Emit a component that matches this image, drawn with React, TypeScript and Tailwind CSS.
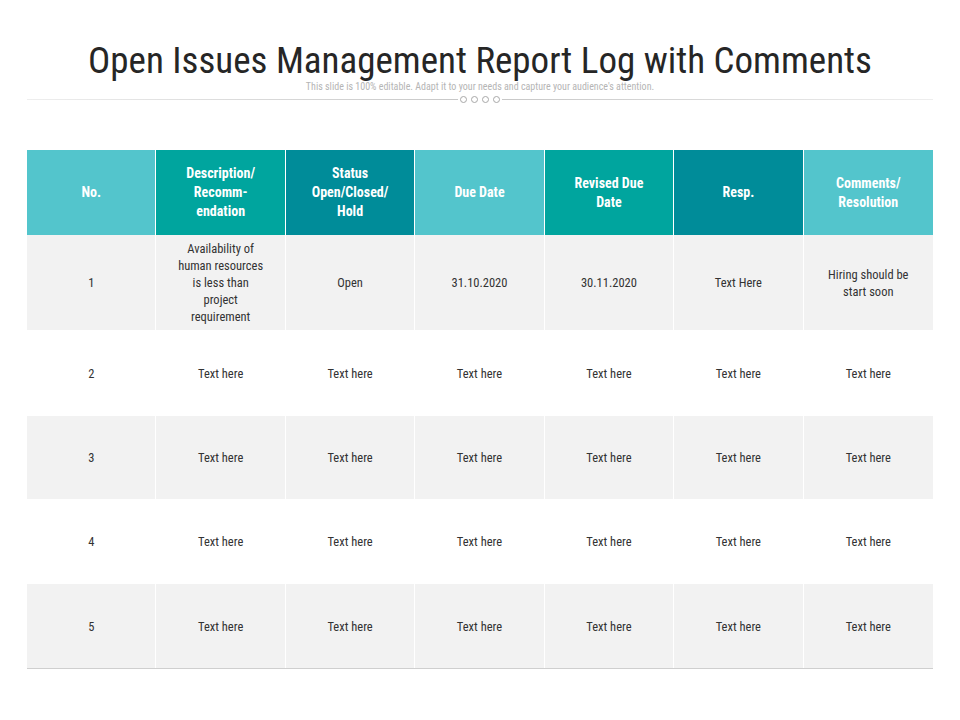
const headers = [
  { t: "No.", c: "bg-[#53c5cc]" },
  { t: "Description/ Recomm-endation", c: "bg-[#00a59e]", lines: ["Description/", "Recomm-", "endation"] },
  { t: "Status", c: "bg-[#008c99]", lines: ["Status", "Open/Closed/", "Hold"] },
  { t: "Due Date", c: "bg-[#53c5cc]" },
  { t: "Revised", c: "bg-[#00a59e]", lines: ["Revised Due", "Date"] },
  { t: "Resp.", c: "bg-[#008c99]" },
  { t: "Comments", c: "bg-[#53c5cc]", lines: ["Comments/", "Resolution"] },
];

const rows: { cells: string[][]; h: string; gray: boolean }[] = [
  {
    cells: [["1"], ["Availability of", "human resources", "is less than", "project", "requirement"], ["Open"], ["31.10.2020"], ["30.11.2020"], ["Text Here"], ["Hiring should be", "start soon"]],
    h: "h-[95px]",
    gray: true,
  },
  { cells: [["2"], ...Array(6).fill(["Text here"])], h: "h-[86px]", gray: false },
  { cells: [["3"], ...Array(6).fill(["Text here"])], h: "h-[83px]", gray: true },
  { cells: [["4"], ...Array(6).fill(["Text here"])], h: "h-[85px]", gray: false },
  { cells: [["5"], ...Array(6).fill(["Text here"])], h: "h-[84px]", gray: true },
];

const font = { fontFamily: '"Liberation Sans Narrow", "Roboto Condensed", Roboto, sans-serif' };

export default function App() {
  return (
    <div className="w-[960px] h-[720px] bg-white" style={font}>
      <div className="pt-[40px] text-center">
        <h1 className="text-[37px] leading-[42px] text-[#262626]">Open Issues Management Report Log with Comments</h1>
        <p className="text-[10px] leading-[10px] text-[#b5b5b5]">
          This slide is 100% editable. Adapt it to your needs and capture your audience's attention.
        </p>
      </div>
      <div className="mx-[27px] mt-[4px] flex items-center">
        <div className="flex-1 h-px bg-gradient-to-r from-[#eeeeee] to-[#c8c8c8]" />
        <div className="flex gap-[4px] px-[2px]">
          {[0, 1, 2, 3].map((i) => (
            <span key={i} className="w-[7px] h-[7px] rounded-full border border-[#a8a8a8]" />
          ))}
        </div>
        <div className="flex-1 h-px bg-gradient-to-l from-[#eeeeee] to-[#c8c8c8]" />
      </div>
      <div className="mx-[27px] mt-[47px] w-[906px]">
        <div className="grid grid-cols-7 h-[85px]">
          {headers.map((h, i) => (
            <div key={i} className={`${h.c} ${i < 6 ? "border-r border-white" : ""} flex flex-col items-center justify-center text-white font-bold text-[14px] leading-[19px] text-center`}>
              {(h.lines ?? [h.t]).map((l) => (
                <span key={l}>{l}</span>
              ))}
            </div>
          ))}
        </div>
        {rows.map((r, ri) => (
          <div key={ri} className={`grid grid-cols-7 ${r.h} ${r.gray ? "bg-[#f2f2f2]" : "bg-white"}`}>
            {r.cells.map((c, ci) => (
              <div key={ci} className={`${ci < 6 ? "border-r border-white" : ""} flex flex-col items-center justify-center text-[12.5px] leading-[17px] text-[#333] text-center`}>
                {c.map((l) => (
                  <span key={l}>{l}</span>
                ))}
              </div>
            ))}
          </div>
        ))}
        <div className="h-px bg-[#cfcfcf]" />
      </div>
    </div>
  );
}
